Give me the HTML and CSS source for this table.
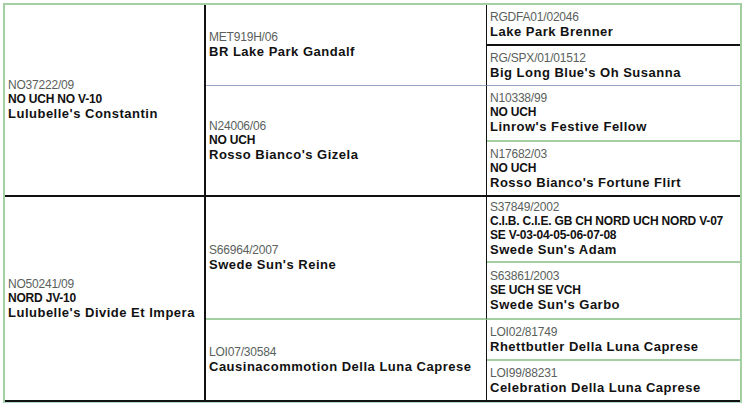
FILE: index.html
```html
<!DOCTYPE html>
<html>
<head>
<meta charset="utf-8">
<link rel="stylesheet" href="styles.css">
</head>
<body>
<div class="ped">
  <div class="cell c1 r1-4 bb-black">
    <div class="reg">NO37222/09</div>
    <div class="title">NO UCH NO V-10</div>
    <div class="name">Lulubelle's Constantin</div>
  </div>
  <div class="cell c2 r1-2 bb-blue">
    <div class="reg">MET919H/06</div>
    <div class="name">BR Lake Park Gandalf</div>
  </div>
  <div class="cell c3 r1 bb-black">
    <div class="reg">RGDFA01/02046</div>
    <div class="name">Lake Park Brenner</div>
  </div>
  <div class="cell c3 r2 bb-blue">
    <div class="reg">RG/SPX/01/01512</div>
    <div class="name">Big Long Blue's Oh Susanna</div>
  </div>
  <div class="cell c2 r3-4 bb-black">
    <div class="reg">N24006/06</div>
    <div class="title">NO UCH</div>
    <div class="name">Rosso Bianco's Gizela</div>
  </div>
  <div class="cell c3 r3 bb-green">
    <div class="reg">N10338/99</div>
    <div class="title">NO UCH</div>
    <div class="name">Linrow's Festive Fellow</div>
  </div>
  <div class="cell c3 r4 bb-black">
    <div class="reg">N17682/03</div>
    <div class="title">NO UCH</div>
    <div class="name">Rosso Bianco's Fortune Flirt</div>
  </div>
  <div class="cell c1 r5-8 bb-black">
    <div class="reg">NO50241/09</div>
    <div class="title">NORD JV-10</div>
    <div class="name">Lulubelle's Divide Et Impera</div>
  </div>
  <div class="cell c2 r5-6 bb-green">
    <div class="reg">S66964/2007</div>
    <div class="name">Swede Sun's Reine</div>
  </div>
  <div class="cell c3 r5 bb-green">
    <div class="reg">S37849/2002</div>
    <div class="title">C.I.B. C.I.E. GB CH NORD UCH NORD V-07<br>SE V-03-04-05-06-07-08</div>
    <div class="name">Swede Sun's Adam</div>
  </div>
  <div class="cell c3 r6 bb-green">
    <div class="reg">S63861/2003</div>
    <div class="title">SE UCH SE VCH</div>
    <div class="name">Swede Sun's Garbo</div>
  </div>
  <div class="cell c2 r7-8 bb-black">
    <div class="reg">LOI07/30584</div>
    <div class="name">Causinacommotion Della Luna Caprese</div>
  </div>
  <div class="cell c3 r7 bb-green">
    <div class="reg">LOI02/81749</div>
    <div class="name">Rhettbutler Della Luna Caprese</div>
  </div>
  <div class="cell c3 r8 bb-black">
    <div class="reg">LOI99/88231</div>
    <div class="name">Celebration Della Luna Caprese</div>
  </div>
</div>
</body>
</html>
```

FILE: styles.css
```css
html, body {
  margin: 0;
  padding: 0;
  background: #ffffff;
}
body {
  padding: 3px 0 0 3px;
  font-family: "Liberation Sans", Arial, sans-serif;
}
.ped {
  display: grid;
  grid-template-columns: 201px 281px 253px;
  grid-template-rows: 41px 40px 56px 55px 66px 57px 41px 41px;
  width: 735px;
  border-top: 2px solid #a3cfa3;
  border-left: 2px solid #a3cfa3;
  border-right: 2px solid #a3cfa3;
  border-bottom: 1px solid #b0d8d0;
  box-sizing: content-box;
}
.cell {
  display: flex;
  flex-direction: column;
  justify-content: center;
  padding: 0 3px;
  border-bottom: 1px solid #a3cfa3;
  min-width: 0;
  overflow: hidden;
}
.c1 { grid-column: 1; border-right: 2px solid #111; }
.c2 { grid-column: 2; border-right: 1px solid #111; }
.c3 { grid-column: 3; }
.r1-4 { grid-row: 1 / 5; }
.r5-8 { grid-row: 5 / 9; }
.r1-2 { grid-row: 1 / 3; }
.r3-4 { grid-row: 3 / 5; }
.r5-6 { grid-row: 5 / 7; }
.r7-8 { grid-row: 7 / 9; }
.r1 { grid-row: 1; }
.r2 { grid-row: 2; }
.r3 { grid-row: 3; }
.r4 { grid-row: 4; }
.r5 { grid-row: 5; }
.r6 { grid-row: 6; }
.r7 { grid-row: 7; }
.r8 { grid-row: 8; }
.bb-black { border-bottom: 2px solid #111; }
.bb-blue { border-bottom: 1px solid #9aa6c6; }
.bb-green { border-bottom: 2px solid #a3cfa3; }
.reg {
  font-size: 12px;
  line-height: 14px;
  color: #5a5f5c;
  letter-spacing: -0.2px;
}
.title {
  font-size: 12px;
  line-height: 14px;
  font-weight: bold;
  color: #111;
  letter-spacing: -0.2px;
}
.name {
  font-size: 13px;
  line-height: 16px;
  font-weight: bold;
  color: #111;
  letter-spacing: 0.5px;
  white-space: nowrap;
}
```
